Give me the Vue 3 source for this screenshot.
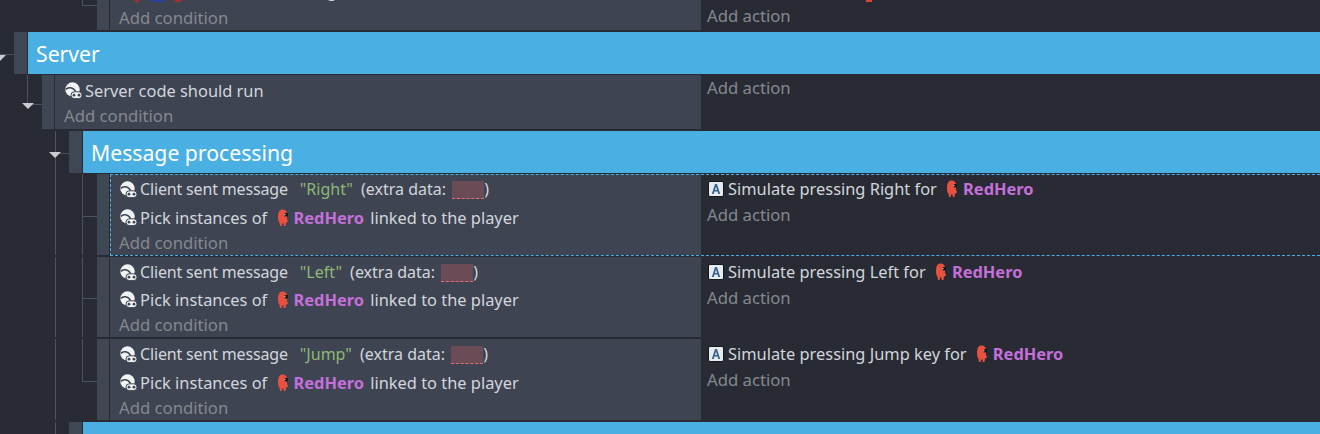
<template>
  <div class="sheet">
    <div class="tree-line main-line"></div>

    <div class="event clipped indent-97">
      <div class="tree-line top-line"></div>
      <div class="tree-branch top-branch"></div>
      <div class="strip"></div>
      <div class="conditions">
        <div class="cut-line">
          <i class="m-red m1"></i><i class="m-blue"></i><i class="m-red m2"></i>
          <span class="cut-g">g</span>
        </div>
        <div class="add">Add condition</div>
      </div>
      <div class="actions">
        <i class="m-red m3"></i>
        <div class="add">Add action</div>
      </div>
    </div>

    <div class="group server-group">
      <div class="tree-branch server-branch"></div>
      <span class="arrow server-arrow"></span>
      <div class="strip group-strip"></div>
      <div class="group-title">Server</div>
    </div>

    <div class="event plain indent-42">
      <div class="tree-line plain-line"></div>
      <div class="tree-branch plain-branch"></div>
      <span class="arrow plain-arrow"></span>
      <div class="strip"></div>
      <div class="conditions">
        <div class="line"><svg class="ic" viewBox="0 0 17 17"><use href="#multi" /></svg>Server code should run</div>
        <div class="add">Add condition</div>
      </div>
      <div class="actions"><div class="add">Add action</div></div>
    </div>

    <div class="group sub-group">
      <div class="tree-branch sub-branch"></div>
      <span class="arrow sub-arrow"></span>
      <div class="strip group-strip"></div>
      <div class="group-title">Message processing</div>
    </div>

    <div class="children">
      <div class="tree-line child-line"></div>
      <div
        v-for="(ev, i) in messages"
        :key="ev.key"
        class="event msg indent-97"
        :class="{ selected: i === 0, wide: ev.wide }"
        :style="{ height: ev.height + 'px' }"
      >
        <div class="tree-branch child-branch" :style="{ top: ev.branch + 'px' }"></div>
        <div class="strip"></div>
        <div class="conditions">
          <div class="line client-line">
            <svg class="ic" viewBox="0 0 17 17"><use href="#multi" /></svg><span class="client">Client sent message</span>
            <span class="str">"{{ ev.key }}"</span>
            (extra data: <span class="blank"></span>)
          </div>
          <div class="line">
            <svg class="ic" viewBox="0 0 17 17"><use href="#multi" /></svg>Pick instances of
            <svg class="hero" viewBox="0 0 12 18"><use href="#hero" /></svg>
            <span class="obj">RedHero</span> linked to the player
          </div>
          <div class="add">Add condition</div>
        </div>
        <div class="actions">
          <div class="line act-line">
            <svg class="ic-a" viewBox="0 0 16 16"><use href="#key" /></svg>{{ ev.action }}
            <svg class="hero" viewBox="0 0 12 18"><use href="#hero" /></svg>
            <span class="obj">RedHero</span>
          </div>
          <div class="add">Add action</div>
        </div>
      </div>
    </div>

    <div class="group sub-group">
      <div class="strip group-strip"></div>
      <div class="group-title"></div>
    </div>

    <svg width="0" height="0" class="defs">
      <defs>
        <g id="multi">
          <circle cx="7.5" cy="7.5" r="7.2" fill="#f2f3f5" />
          <path d="M0.8 7.5 C3 4.6 8 5 10.6 9.6" fill="none" stroke="#3e4452" stroke-width="1.5" />
          <rect x="6" y="9.8" width="11" height="6.8" rx="3.3" fill="#f2f3f5" stroke="#3e4452" stroke-width="1" />
          <circle cx="9" cy="13.2" r="1.4" fill="#3e4452" />
          <circle cx="14" cy="13.2" r="1.4" fill="#3e4452" />
        </g>
        <g id="key">
          <rect x="0.5" y="0.5" width="15" height="15" rx="1.5" fill="#e6ebf0" stroke="#15171b" />
          <path d="M3.8 13 L7 3 H9 L12.2 13 H10.2 L9.5 10.6 H6.5 L5.8 13 Z M7 8.9 H9 L8 5.6 Z" fill="#37648c" fill-rule="evenodd" />
        </g>
        <g id="hero">
          <path d="M5.5 0.5 C8.5 0.5 10 2 10 5 V10.5 L11 11.5 C11 13 10 13.5 9 13.5 L8.5 17 H6.8 L6.4 14.5 H5 L4.6 17 H3 L2.6 14 C1.6 13 1 11 1 8 C1 3 2.5 0.5 5.5 0.5 Z" fill="#e8503f" />
          <rect x="7.6" y="4" width="3.2" height="3.4" fill="#17151a" />
          <rect x="7.4" y="4.8" width="1" height="1.4" fill="#eee" />
        </g>
      </defs>
    </svg>
  </div>
</template>

<script setup>
const messages = [
  { key: "Right", action: "Simulate pressing Right for", branch: 42, height: 81, wide: true },
  { key: "Left", action: "Simulate pressing Left for", branch: 41, height: 80, wide: false },
  { key: "Jump", action: "Simulate pressing Jump key for", branch: 42, height: 81, wide: true },
];
</script>

<style scoped>
.sheet {
  position: relative;
  width: 1320px;
  height: 434px;
  overflow: hidden;
  background: #282b33;
  color: #d2d6dc;
  font-family: "Noto Sans", "Open Sans", sans-serif;
  font-size: 16.4px;
  line-height: 22px;
}
.defs {
  position: absolute;
}
.indent-97 {
  padding-left: 97px;
}
.indent-42 {
  padding-left: 42px;
}
.event,
.group {
  position: relative;
  display: flex;
}
.event {
  border-bottom: 2px solid #282b33;
}
.clipped {
  height: 30px;
}
.plain {
  height: 54px;
}
.group {
  height: 42px;
}
.server-group {
  padding-left: 14px;
  margin-bottom: 1px;
}
.sub-group {
  padding-left: 69px;
}
.children {
  position: relative;
  margin-top: 1px;
}
.strip {
  flex: none;
  width: 12px;
  background: #3f4654;
  margin-right: 1px;
}
.group-strip {
  width: 13px;
  margin-right: 1px;
}
.group-title {
  flex: 1;
  background: #4ab0e4;
  color: #fff;
  font-size: 21.2px;
  line-height: 44px;
  padding-left: 8px;
}
.conditions {
  width: 591px;
  flex: none;
  background: #3e4452;
  padding: 2px 0 0 9px;
  box-sizing: border-box;
}
.plain .conditions {
  width: 646px;
}
.clipped .conditions {
  padding-top: 0;
}
.actions {
  position: relative;
  flex: 1;
  background: #282b33;
  padding: 1px 0 0 6px;
}
.plain .actions {
  padding-top: 0;
}
.clipped .actions {
  padding-top: 3px;
}
.line {
  height: 27px;
  line-height: 27px;
  white-space: pre-wrap;
  display: flex;
  align-items: center;
}
.line > * {
  flex: none;
}
.wide .conditions .line:first-child {
  margin-bottom: 1px;
}
.client-line {
  font-size: 16px;
}
.client {
  letter-spacing: -0.16px;
}
.cut-line {
  position: relative;
  height: 5px;
}
.cut-line i,
.actions > i {
  position: absolute;
  top: 0;
  height: 2px;
}
.cut-g {
  position: absolute;
  left: 208px;
  top: -20px;
  line-height: 22px;
  color: #d2d6dc;
}
.act-line {
  padding-left: 1px;
}
.add {
  color: #85888f;
  font-size: 16.7px;
  height: 26px;
  line-height: 26px;
}
.conditions .line + .add {
  margin-top: -1px;
}
.ic {
  width: 17px;
  height: 17px;
  margin: 0 3px 0 1px;
}
.ic-a {
  width: 16px;
  height: 16px;
  margin-right: 4px;
}
.hero {
  width: 12px;
  height: 18px;
  margin: 0 5px 0 5px;
}
.str {
  color: #8fb872;
  margin: 0 4px 0 12px;
}
.obj {
  color: #c56fdb;
  font-weight: 700;
  margin-right: 2px;
}
.blank {
  display: inline-block;
  width: 32px;
  height: 18px;
  margin-left: 2px;
  background: #6a4b56;
  border-bottom: 1px dashed #e06c75;
  box-sizing: border-box;
}
.selected::after {
  content: "";
  position: absolute;
  left: 110px;
  right: 0;
  top: 0;
  bottom: -1px;
  border: 1px dashed #4ab0e4;
  border-right: 0;
  pointer-events: none;
}
.tree-line,
.tree-branch {
  position: absolute;
  background: #4d525c;
}
.tree-line {
  width: 1px;
}
.tree-branch {
  height: 1px;
}
.main-line {
  left: 55px;
  top: 131px;
  height: 303px;
}
.top-line {
  left: 82px;
  top: 0;
  height: 6px;
}
.top-branch {
  left: 82px;
  top: 5px;
  width: 15px;
}
.server-branch {
  left: 0;
  top: 22px;
  width: 14px;
}
.plain-line {
  left: 27px;
  top: 0;
  height: 29px;
}
.plain-branch {
  left: 27px;
  top: 29px;
  width: 15px;
}
.sub-branch {
  left: 55px;
  top: 22px;
  width: 14px;
}
.child-line {
  left: 82px;
  top: 0;
  height: 208px;
}
.child-branch {
  left: 82px;
  width: 15px;
}
.arrow {
  position: absolute;
  width: 0;
  height: 0;
  border-left: 6px solid transparent;
  border-right: 6px solid transparent;
  border-top: 6px solid #c9ccd2;
}
.server-arrow {
  left: -6px;
  top: 23px;
}
.plain-arrow {
  left: 22px;
  top: 28px;
}
.sub-arrow {
  left: 49px;
  top: 21px;
}
.m-red {
  width: 4px;
  background: #b0282a;
}
.m-blue {
  left: 32px;
  width: 13px;
  background: #2c3f9a;
}
.m1 {
  left: 16px;
}
.m2 {
  left: 56px;
  width: 6px;
}
.m3 {
  left: 165px;
  width: 6px;
  background: #d9453a;
}
</style>
